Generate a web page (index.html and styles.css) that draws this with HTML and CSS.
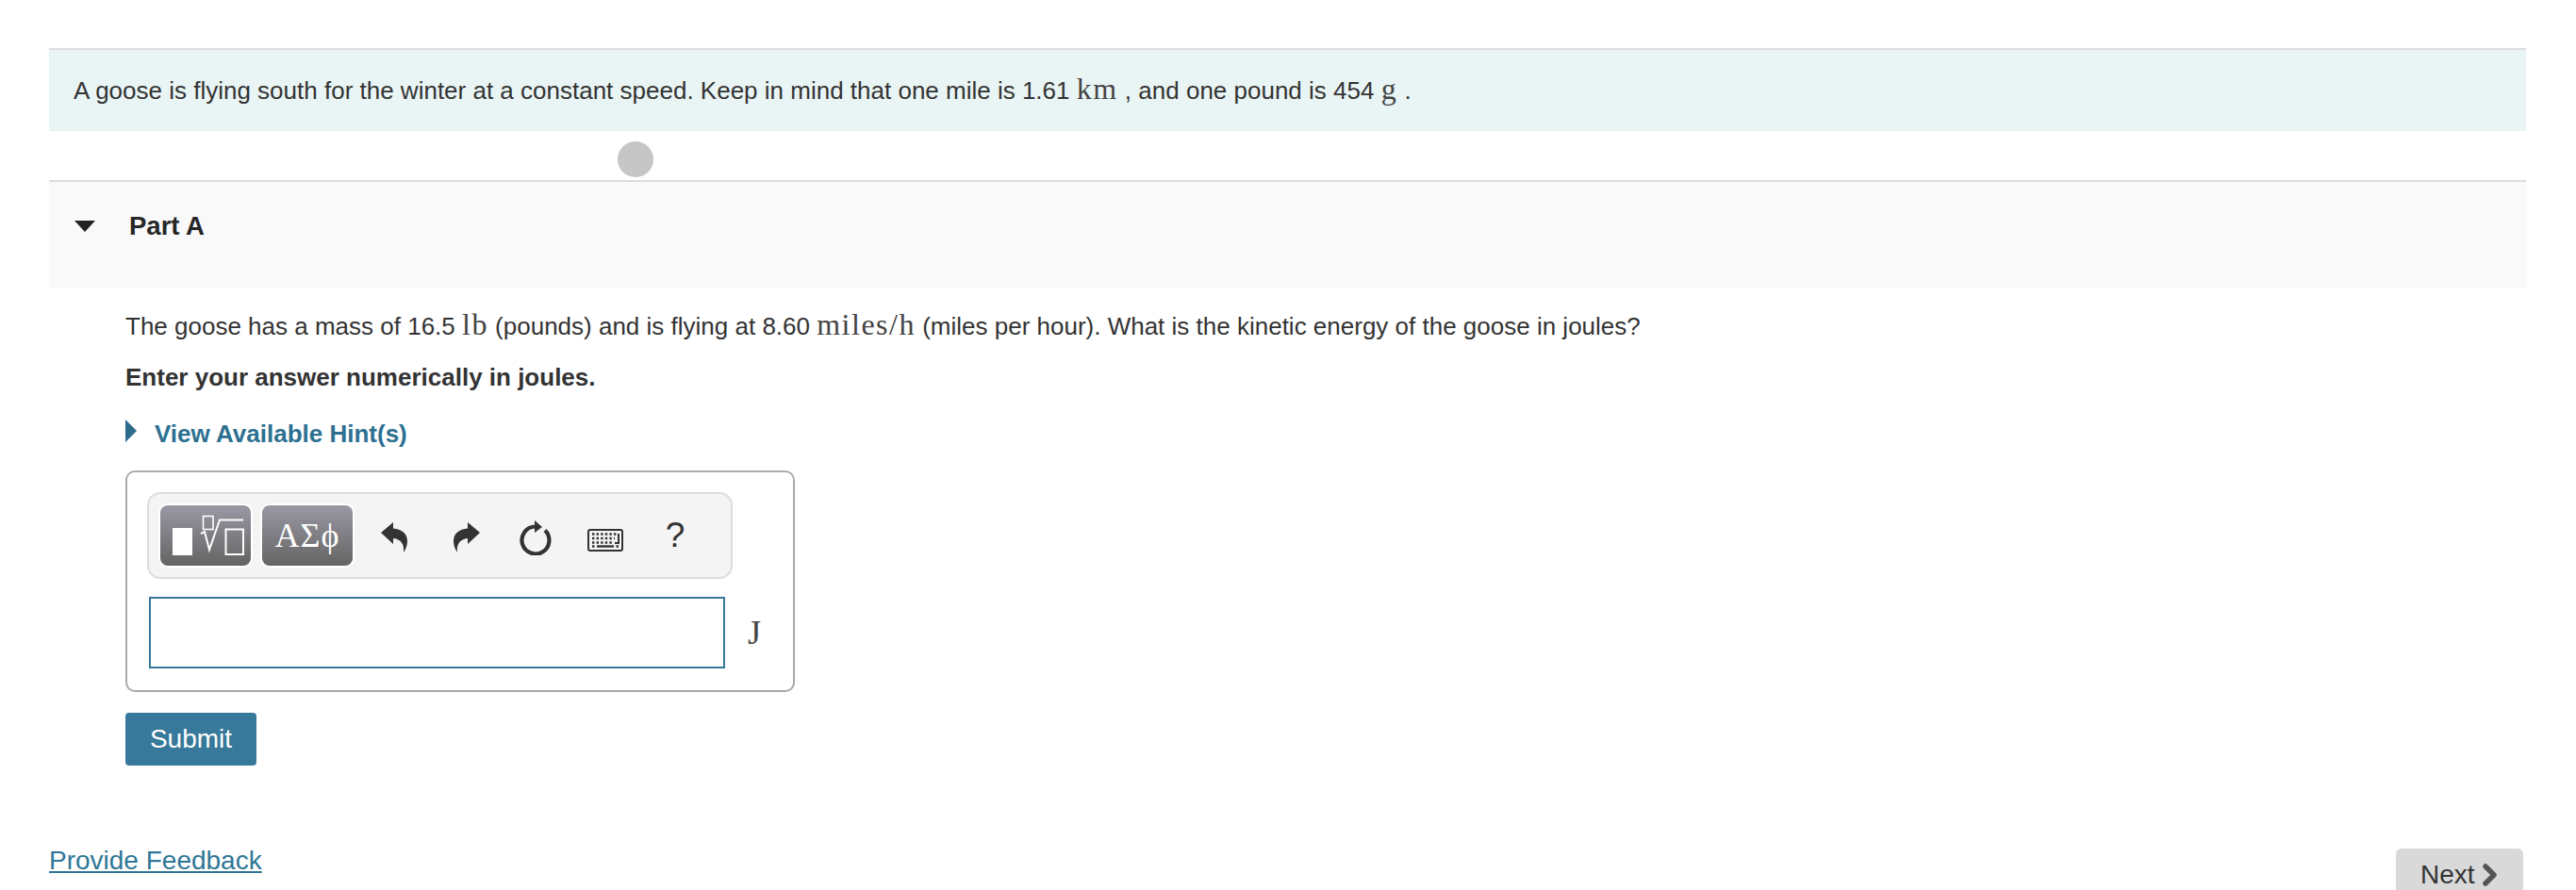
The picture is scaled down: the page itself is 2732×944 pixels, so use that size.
FILE: index.html
```html
<!DOCTYPE html>
<html lang="en">
<head>
    <meta charset="UTF-8">
    <meta name="viewport" content="width=device-width, initial-scale=1.0">
    <title>Part A</title>
    <link rel="stylesheet" href="styles.css">
</head>
<body>
    <div class="page">
        <div class="intro">A goose is flying south for the winter at a constant speed. Keep in mind that one mile is 1.61 <span class="math">km</span> , and one pound is 454 <span class="math">g</span> .</div>

        <div class="click-dot"></div>

        <div class="part-head">
            <span class="arrow-down"></span>
            <h2>Part A</h2>
        </div>

        <div class="part-body">
            <p class="question">The goose has a mass of 16.5 <span class="math">lb</span> (pounds) and is flying at 8.60 <span class="math">miles/h</span> (miles per hour). What is the kinetic energy of the goose in joules?</p>
            <p class="instruction">Enter your answer numerically in joules.</p>
            <a class="hint" href="#"><span class="arrow-right"></span>View Available Hint(s)</a>

            <div class="answer-box">
                <div class="toolbar">
                    <button class="tpl-btn" aria-label="Templates">
                        <svg width="96" height="64" viewBox="0 0 96 64">
                            <rect x="13" y="24" width="21" height="29" fill="#fff"/>
                            <rect x="45.500" y="11.500" width="10.500" height="14" fill="none" stroke="#fff" stroke-width="1.600"/>
                            <path d="M43 30 L47 28 L52 47 L63 15.500 H88" fill="none" stroke="#fff" stroke-width="2"/>
                            <rect x="69.500" y="25.500" width="18.500" height="26.500" fill="none" stroke="#fff" stroke-width="2"/>
                        </svg>
                    </button>
                    <button class="tpl-btn symbols">ΑΣϕ</button>
                    <span class="tool tool-undo">
                        <svg width="28" height="32" viewBox="0 0 28 32"><path d="M0 11 L13 0 V6.500 C22 7 28 12 28 20 C28 25 26 29 24 32 C25 24 22 18 13 17 V23 Z" fill="#333"/></svg>
                    </span>
                    <span class="tool tool-redo">
                        <svg width="28" height="32" viewBox="0 0 28 32"><path d="M28 11 L15 0 V6.500 C6 7 0 12 0 20 C0 25 2 29 4 32 C3 24 6 18 15 17 V23 Z" fill="#333"/></svg>
                    </span>
                    <span class="tool tool-reset">
                        <svg width="34" height="38" viewBox="0 0 34 38"><path d="M27 11.500 A14.500 14.500 0 1 1 16 7.500" fill="none" stroke="#333" stroke-width="4.200"/><path d="M16 1 L24 8 L16 14 Z" fill="#333"/></svg>
                    </span>
                    <span class="tool tool-keys">
                        <svg width="38" height="24" viewBox="0 0 38 24">
                            <rect x="1" y="1" width="36" height="22" rx="2" fill="none" stroke="#333" stroke-width="2"/>
                            <path d="M5 5.500 H31 M5 10 H29 M5 14.500 H28" stroke="#333" stroke-width="2.400" stroke-dasharray="2.400 2.200" fill="none"/>
                            <path d="M33 5 V15 H29" stroke="#333" stroke-width="2" fill="none"/>
                            <path d="M10 18.500 H28" stroke="#333" stroke-width="2.400" fill="none"/>
                            <path d="M5 18.500 H7.500 M30.500 18.500 H33" stroke="#333" stroke-width="2.400" fill="none"/>
                        </svg>
                    </span>
                    <span class="tool tool-help">?</span>
                </div>
                <div class="answer-row">
                    <input class="answer-input" type="text">
                    <span class="unit">J</span>
                </div>
            </div>

            <button class="submit">Submit</button>
        </div>

        <div class="footer">
            <a class="feedback" href="#">Provide Feedback</a>
            <a class="next" href="#">Next
                <svg width="18" height="26" viewBox="0 0 18 26"><path d="M4 4 L13 13 L4 22" fill="none" stroke="#555" stroke-width="5.500" stroke-linejoin="round" stroke-linecap="round"/></svg>
            </a>
        </div>
    </div>
</body>
</html>
```

FILE: styles.css
```css
*{
    margin: 0;
    padding: 0;
    box-sizing: border-box;
    font-family: "Liberation Sans", Arial, Helvetica, sans-serif;
}

html, body{
    height: 100%;
    overflow: hidden;
}

body{
    background-color: #fff;
    color: #333;
    font-size: 26px;
}

.page{
    position: relative;
    height: 944px;
    padding: 51px 53px 0 52px;
}

.math{
    font-family: "Liberation Serif", "DejaVu Serif", serif;
    font-size: 32px;
    line-height: 0;
    letter-spacing: 1.500px;
    color: #444;
}

.intro{
    height: 88px;
    border-top: 2px solid #ddd;
    background-color: #e9f5f5;
    padding: 0 26px;
    line-height: 86px;
    white-space: nowrap;
}

.click-dot{
    position: absolute;
    left: 655px;
    top: 150px;
    width: 38px;
    height: 38px;
    border-radius: 50%;
    background-color: #c6c6c6;
}

.part-head{
    display: flex;
    align-items: center;
    height: 115px;
    margin-top: 52px;
    padding: 0 27px 20px;
    border-top: 2px solid #ddd;
    background-color: #f9f9f9;
}

.part-head h2{
    font-size: 27.500px;
    color: #262626;
}

.arrow-down{
    width: 0;
    height: 0;
    margin-right: 36px;
    border-left: 11px solid transparent;
    border-right: 11px solid transparent;
    border-top: 12px solid #222;
}

.part-body{
    padding-left: 81px;
}

.question{
    margin-top: 21px;
    line-height: 38px;
    white-space: nowrap;
}

.instruction{
    margin-top: 16px;
    line-height: 38px;
    font-weight: bold;
}

.hint{
    display: flex;
    align-items: center;
    margin-top: 22px;
    line-height: 38px;
    font-weight: bold;
    color: #2d7091;
    text-decoration: none;
}

.arrow-right{
    width: 0;
    height: 0;
    margin-right: 19px;
    margin-bottom: 6px;
    border-top: 12px solid transparent;
    border-bottom: 12px solid transparent;
    border-left: 12px solid #2d6b8c;
}

.answer-box{
    width: 710px;
    height: 235px;
    margin-top: 20px;
    padding: 21px 21px 0;
    border: 2px solid #aaa;
    border-radius: 10px;
}

.toolbar{
    display: flex;
    align-items: center;
    width: 621px;
    height: 92px;
    padding-left: 12px;
    border: 2px solid #ddd;
    border-radius: 14px;
    background-color: #f4f4f4;
}

.tpl-btn{
    width: 96px;
    height: 64px;
    margin-right: 12px;
    border: none;
    border-radius: 8px;
    background: linear-gradient(#9a98a3, #646464);
    box-shadow: 0 0 0 2px #fff;
    color: #fff;
    line-height: 0;
}

.symbols{
    font-family: "Liberation Serif", "DejaVu Serif", serif;
    font-size: 36px;
    line-height: 64px;
    letter-spacing: 1px;
}

.tool{
    display: flex;
    justify-content: center;
    align-items: center;
    height: 64px;
}

.tool-undo{
    width: 60px;
    margin-left: 2px;
    padding-top: 4px;
}

.tool-redo{
    width: 70px;
    margin-left: 12px;
    padding-top: 4px;
}

.tool-reset{
    width: 60px;
    margin-left: 8px;
    padding-top: 4px;
}

.tool-keys{
    width: 60px;
    margin-left: 14px;
    padding-top: 10px;
}

.tool-help{
    width: 40px;
    margin-left: 24px;
    font-size: 37px;
}

.answer-row{
    display: flex;
    align-items: center;
    margin-top: 19px;
    padding-left: 2px;
}

.answer-input{
    width: 611px;
    height: 76px;
    border: 2px solid #35789a;
    background-color: #fff;
    outline: none;
}

.unit{
    margin-left: 24px;
    font-family: "Liberation Serif", "DejaVu Serif", serif;
    font-size: 36px;
    color: #444;
}

.submit{
    display: block;
    width: 139px;
    height: 56px;
    margin-top: 22px;
    border: none;
    border-radius: 4px;
    background-color: #37799a;
    color: #fff;
    font-size: 28px;
}

.footer{
    display: flex;
    justify-content: space-between;
    align-items: flex-start;
    margin-top: 79px;
}

.feedback{
    font-size: 28px;
    line-height: 44px;
    color: #2f7796;
    text-decoration: underline;
}

.next{
    display: flex;
    align-items: center;
    gap: 7px;
    width: 135px;
    height: 64px;
    margin-top: 9px;
    margin-right: 3px;
    padding: 0 0 8px 26px;
    border-radius: 6px;
    background-color: #d9d9d9;
    color: #333;
    font-size: 28px;
    text-decoration: none;
}
```
